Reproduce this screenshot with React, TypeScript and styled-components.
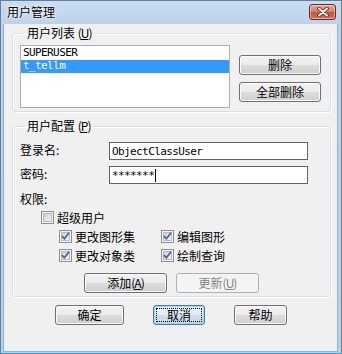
import styled, { createGlobalStyle } from "styled-components";

const GlobalStyle = createGlobalStyle`
  html, body {
    margin: 0;
    padding: 0;
    background: #ffffff;
  }
  body {
    font-family: "Noto Sans CJK SC", "Liberation Sans", sans-serif;
    font-size: 12px;
    color: #000;
  }
  * {
    box-sizing: border-box;
  }
`;

const Window = styled.div`
    width: 342px;
    height: 354px;
    display: flex;
    flex-direction: column;
    background: linear-gradient(#cadcf0, #bdd2ea 24px, #b8cfe8);
    border: 1px solid #62809f;
    border-bottom-color: #2f9fd8;
    padding: 0 3px 1px 2px;
`;

const TitleBar = styled.div`
    height: 23px;
    display: flex;
    align-items: flex-start;
    justify-content: space-between;
    padding-left: 4px;
`;

const Title = styled.div`
    font-size: 12px;
    line-height: 22px;
    text-shadow: 0 0 4px #fff, 0 0 2px #fff;
`;

const CloseButton = styled.div`
    width: 27px;
    height: 16px;
    margin-top: 3px;
    margin-right: 2px;
    border: 1px solid #6b2a25;
    border-radius: 3px;
    background: linear-gradient(#e9a99c, #d8806f 45%, #c7513d 55%, #d27460);
    box-shadow: inset 0 0 0 1px rgba(255, 220, 210, 0.55);
    display: flex;
    align-items: center;
    justify-content: center;
`;

const Client = styled.div`
    flex: 1;
    background: #f0f0f0;
    border: 1px solid #8fb3d6;
    border-top: none;
    padding-top: 2px;
    display: flex;
    flex-direction: column;
`;

const Group = styled.fieldset<{ $gap?: number }>`
    margin: ${(p) => p.$gap ?? 0}px 6px 0 8px;
    padding: 0 9px 3px 7px;
    border: 1px solid #d5dfe5;
    border-radius: 3px;
    box-shadow: inset 1px 1px 0 #fff, 1px 1px 0 #fff;
    min-width: 0;
`;

const Legend = styled.legend`
    margin-left: 4px;
    padding: 0 3px;
    font-size: 12px;
    line-height: 14px;
`;

const Key = styled.span`
    letter-spacing: -1px;
    & u {
        text-decoration: underline;
        text-underline-offset: 1px;
    }
`;

const ListRow = styled.div`
    display: flex;
    gap: 9px;
    padding-top: 5px;
`;

const ListBox = styled.div`
    width: 210px;
    height: 63px;
    background: #fff;
    border: 1px solid #abadb3;
    padding-top: 1px;
`;

const ListItem = styled.div<{ $selected?: boolean }>`
    height: 13px;
    line-height: 12px;
    padding-left: 2px;
    font-family: "DejaVu Sans Mono", monospace;
    font-size: 11px;
    letter-spacing: -0.6px;
    background: ${(p) => (p.$selected ? "#3399ff" : "transparent")};
    color: ${(p) => (p.$selected ? "#fff" : "#000")};
`;

const SideButtons = styled.div`
    display: flex;
    flex-direction: column;
    gap: 7px;
    padding-top: 10px;
`;

const Button = styled.button<{ $w: number; $focus?: boolean }>`
    width: ${(p) => p.$w}px;
    height: 20px;
    padding: 0;
    font-family: "Noto Sans CJK SC", "Liberation Sans", sans-serif;
    font-size: 12px;
    line-height: 16px;
    color: #000;
    border: 1px solid ${(p) => (p.$focus ? "#3c7fb1" : "#707070")};
    border-radius: 3px;
    background: ${(p) =>
        p.$focus
            ? "linear-gradient(#eef4f9, #e3ecf4 50%, #d2e0ec 50%, #c6d7e6)"
            : "linear-gradient(#f2f2f2, #ebebeb 50%, #dddddd 50%, #cfcfcf)"};
    box-shadow: inset 0 0 0 1px ${(p) => (p.$focus ? "#a6d3ef" : "#fbfbfb")};
    outline: ${(p) => (p.$focus ? "1px dotted #000" : "none")};
    outline-offset: -4px;

    &:disabled {
        color: #838383;
        border-color: #adb2b5;
        background: #f4f4f4;
        box-shadow: none;
    }
`;

const Form = styled.div`
    display: grid;
    grid-template-columns: 89px 199px;
    row-gap: 6px;
    padding-top: 9px;
    align-items: center;
`;

const Label = styled.div`
    font-size: 12px;
    line-height: 14px;
    padding-bottom: 2px;
`;

const Field = styled.div`
    height: 18px;
    border: 1px solid #646464;
    background: #fff;
    padding-left: 2px;
    display: flex;
    align-items: center;
    font-family: "DejaVu Sans Mono", monospace;
    font-size: 11px;
    letter-spacing: -0.6px;
`;

const Caret = styled.span`
    display: inline-block;
    width: 1px;
    height: 13px;
    margin-left: 1px;
    background: #000;
`;

const Section = styled.div`
    margin-top: 8px;
    line-height: 14px;
`;

const SuperRow = styled.div`
    height: 19px;
    margin-top: 2px;
    padding-left: 21px;
    display: flex;
    align-items: center;
`;

const Checks = styled.div`
    display: grid;
    grid-template-columns: 102px 102px;
    grid-auto-rows: 19px;
    padding-left: 39px;
`;

const CheckRow = styled.label`
    display: flex;
    align-items: center;
    gap: 3px;
    line-height: 14px;
    white-space: nowrap;
`;

const Box = styled.span`
    width: 13px;
    height: 13px;
    flex: none;
    border: 1px solid #8e8f8f;
    padding: 1px;
    background: #f4f4f4;
    display: flex;
`;

const BoxInner = styled.span`
    flex: 1;
    border: 1px solid #b5b8bc;
    background: linear-gradient(135deg, #cfd2d6, #f2f3f4);
    display: flex;
    align-items: center;
    justify-content: center;
`;

const ActionRow = styled.div`
    display: flex;
    gap: 9px;
    padding-left: 64px;
    margin-top: 8px;
`;

const BottomRow = styled.div`
    display: flex;
    gap: 29px;
    padding-left: 51px;
    margin-top: 8px;
`;

function Check({ checked, label }: { checked: boolean; label: string }) {
    return (
        <CheckRow>
            <Box>
                <BoxInner>
                    {checked && (
                        <svg width="9" height="9" viewBox="0 0 9 9" style={{ margin: -2 }}>
                            <path d="M1 4.2 L3.4 6.8 L8 0.8" fill="none" stroke="#4a5f97" strokeWidth="1.7" />
                        </svg>
                    )}
                </BoxInner>
            </Box>
            {label}
        </CheckRow>
    );
}

export default function App() {
    return (
        <>
            <GlobalStyle />
            <Window>
                <TitleBar>
                    <Title>用户管理</Title>
                    <CloseButton>
                        <svg width="12" height="10" viewBox="0 0 12 10">
                            <path d="M2 1.5 L10 8.5 M10 1.5 L2 8.5" stroke="#5a1d17" strokeWidth="3.6" strokeLinecap="round" />
                            <path d="M2 1.5 L10 8.5 M10 1.5 L2 8.5" stroke="#fff" strokeWidth="2" strokeLinecap="round" />
                        </svg>
                    </CloseButton>
                </TitleBar>
                <Client>
                    <Group>
                        <Legend>
                            用户列表 <Key>(<u>U</u>)</Key>
                        </Legend>
                        <ListRow>
                            <ListBox>
                                <ListItem>SUPERUSER</ListItem>
                                <ListItem $selected>t_tellm</ListItem>
                            </ListBox>
                            <SideButtons>
                                <Button $w={82}>删除</Button>
                                <Button $w={82}>全部删除</Button>
                            </SideButtons>
                        </ListRow>
                    </Group>

                    <Group $gap={7}>
                        <Legend>
                            用户配置 <Key>(<u>P</u>)</Key>
                        </Legend>
                        <Form>
                            <Label>登录名:</Label>
                            <Field>ObjectClassUser</Field>
                            <Label>密码:</Label>
                            <Field>
                                *******
                                <Caret />
                            </Field>
                        </Form>
                        <Section>权限:</Section>
                        <SuperRow>
                            <Check checked={false} label="超级用户" />
                        </SuperRow>
                        <Checks>
                            <Check checked label="更改图形集" />
                            <Check checked label="编辑图形" />
                            <Check checked label="更改对象类" />
                            <Check checked label="绘制查询" />
                        </Checks>
                        <ActionRow>
                            <Button $w={83}>
                                添加<Key>(<u>A</u>)</Key>
                            </Button>
                            <Button $w={83} disabled>
                                更新<Key>(<u>U</u>)</Key>
                            </Button>
                        </ActionRow>
                    </Group>

                    <BottomRow>
                        <Button $w={69}>确定</Button>
                        <Button $w={52} $focus>
                            取消
                        </Button>
                        <Button $w={53}>帮助</Button>
                    </BottomRow>
                </Client>
            </Window>
        </>
    );
}
